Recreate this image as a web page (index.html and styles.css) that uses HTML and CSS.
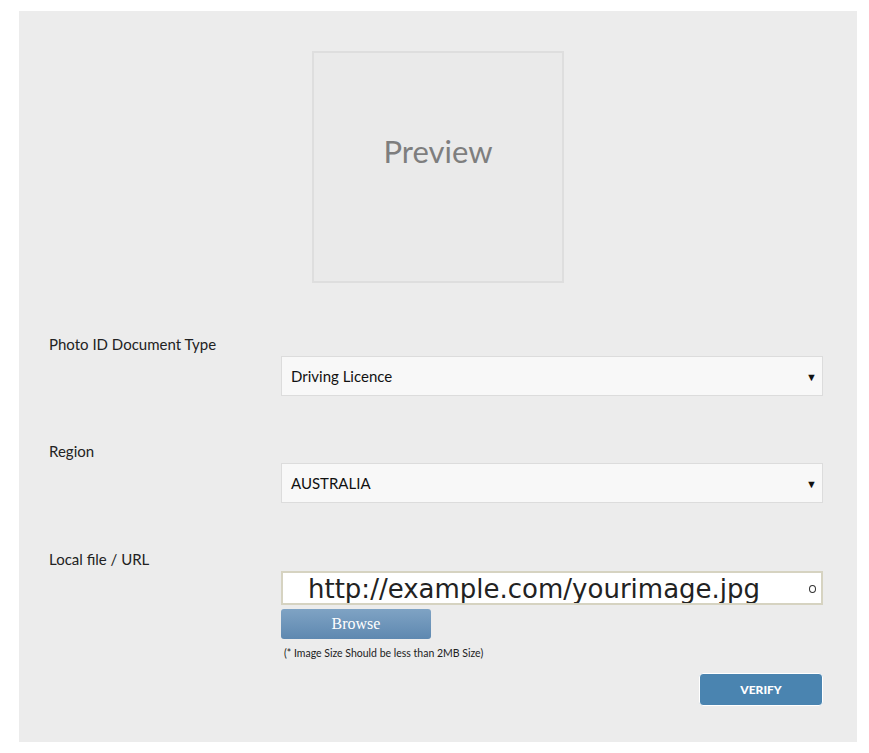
FILE: index.html
```html
<!DOCTYPE html>
<html>
<head>
<meta charset="utf-8">
<link rel="stylesheet" href="styles.css">
</head>
<body>
<div class="panel">
  <div class="preview-wrap">
    <div class="preview">Preview</div>
  </div>
  <div class="row">
    <div class="label">Photo ID Document Type</div>
    <div class="field">
      <div class="select"><span>Driving Licence</span><span class="arrow">&#9660;</span></div>
    </div>
  </div>
  <div class="row">
    <div class="label">Region</div>
    <div class="field">
      <div class="select"><span>AUSTRALIA</span><span class="arrow">&#9660;</span></div>
    </div>
  </div>
  <div class="row last">
    <div class="label">Local file / URL</div>
    <div class="field">
      <div class="url"><span class="url-text">http://example.com/yourimage.jpg</span><span class="knob"></span></div>
      <button class="browse">Browse</button>
      <div class="note">(* Image Size Should be less than 2MB Size)</div>
      <div class="actions"><button class="verify">VERIFY</button></div>
    </div>
  </div>
</div>
</body>
</html>
```
FILE: styles.css
```css
html, body { margin: 0; padding: 0; background: #fff; }
body { padding: 11px 12px 11px 19px; font-family: "Lato", "Open Sans", sans-serif; }
.panel {
  width: 838px;
  height: 731px;
  background: #ececec;
  box-sizing: border-box;
  padding-top: 40px;
}
.preview-wrap { display: flex; padding-left: 293px; }
.preview {
  width: 252px;
  height: 232px;
  box-sizing: border-box;
  border: 2px solid #dedede;
  background: #eaeaea;
  color: #7e7e7e;
  font-size: 31px;
  display: flex;
  justify-content: center;
  padding-top: 78px;
  line-height: 40px;
}
.row { display: flex; margin-top: 51px; }
.row + .row { margin-top: 45px; }
.row.last { margin-top: 46px; }
.label {
  width: 232px;
  padding-left: 30px;
  font-size: 15px;
  color: #222;
  line-height: 20px;
}
.field { width: 542px; padding-top: 22px; }
.select {
  height: 40px;
  box-sizing: border-box;
  border: 1px solid #dcdcdc;
  background: #f8f8f8;
  display: flex;
  align-items: center;
  justify-content: space-between;
  padding: 0 5px 0 9px;
  font-size: 15px;
  color: #111;
}
.arrow { font-size: 11px; color: #111; }
.url {
  height: 34px;
  box-sizing: border-box;
  border: 2px solid #d6d3c1;
  background: #fff;
  display: flex;
  align-items: center;
  justify-content: space-between;
  padding: 0 5px 0 25px;
  overflow: hidden;
}
.url-text {
  font-family: "DejaVu Sans", sans-serif;
  font-size: 26px;
  color: #222;
  line-height: 30px;
  margin-top: 2px;
}
.knob {
  width: 5px; height: 6px;
  border: 1.5px solid #333;
  border-radius: 50%;
  margin-top: 2px;
}
.browse {
  display: block;
  margin-top: 4px;
  width: 150px;
  height: 30px;
  border: 0;
  border-radius: 3px;
  background: linear-gradient(#7fa3c4, #5e88b0);
  color: #fff;
  font-family: "Liberation Serif", serif;
  font-size: 16px;
  padding: 0;
}
.note {
  margin-top: 8px;
  padding-left: 3px;
  font-size: 10.5px;
  color: #222;
}
.actions { display: flex; justify-content: flex-end; margin-top: 14px; }
.verify {
  width: 124px;
  height: 33px;
  background: #4a84b0;
  border: 1px solid #fff;
  border-radius: 4px;
  color: #fff;
  font-family: "Lato", sans-serif;
  font-weight: 900;
  font-size: 12px;
  padding: 0;
}
```
